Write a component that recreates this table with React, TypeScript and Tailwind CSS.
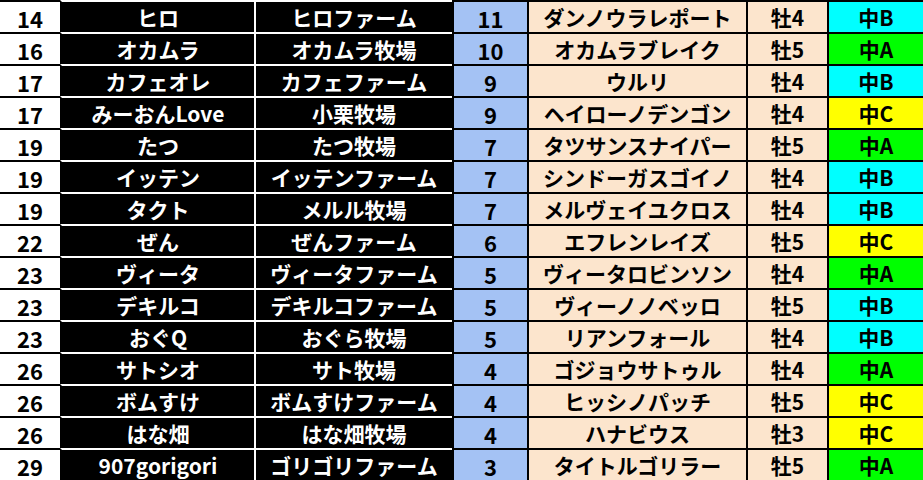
import React from "react";

type Row = {
  rank: number;
  name: string;
  farm: string;
  num: number;
  horse: string;
  sex: string;
  grade: string;
};

const rows: Row[] = [
  { rank: 14, name: "ヒロ", farm: "ヒロファーム", num: 11, horse: "ダンノウラレポート", sex: "牡4", grade: "中B" },
  { rank: 16, name: "オカムラ", farm: "オカムラ牧場", num: 10, horse: "オカムラブレイク", sex: "牡5", grade: "中A" },
  { rank: 17, name: "カフェオレ", farm: "カフェファーム", num: 9, horse: "ウルリ", sex: "牡4", grade: "中B" },
  { rank: 17, name: "みーおんLove", farm: "小栗牧場", num: 9, horse: "ヘイローノデンゴン", sex: "牡4", grade: "中C" },
  { rank: 19, name: "たつ", farm: "たつ牧場", num: 7, horse: "タツサンスナイパー", sex: "牡5", grade: "中A" },
  { rank: 19, name: "イッテン", farm: "イッテンファーム", num: 7, horse: "シンドーガスゴイノ", sex: "牡4", grade: "中B" },
  { rank: 19, name: "タクト", farm: "メルル牧場", num: 7, horse: "メルヴェイユクロス", sex: "牡4", grade: "中B" },
  { rank: 22, name: "ぜん", farm: "ぜんファーム", num: 6, horse: "エフレンレイズ", sex: "牡5", grade: "中C" },
  { rank: 23, name: "ヴィータ", farm: "ヴィータファーム", num: 5, horse: "ヴィータロビンソン", sex: "牡4", grade: "中A" },
  { rank: 23, name: "デキルコ", farm: "デキルコファーム", num: 5, horse: "ヴィーノノベッロ", sex: "牡5", grade: "中B" },
  { rank: 23, name: "おぐQ", farm: "おぐら牧場", num: 5, horse: "リアンフォール", sex: "牡4", grade: "中B" },
  { rank: 26, name: "サトシオ", farm: "サト牧場", num: 4, horse: "ゴジョウサトゥル", sex: "牡4", grade: "中A" },
  { rank: 26, name: "ボムすけ", farm: "ボムすけファーム", num: 4, horse: "ヒッシノパッチ", sex: "牡5", grade: "中C" },
  { rank: 26, name: "はな畑", farm: "はな畑牧場", num: 4, horse: "ハナビウス", sex: "牡3", grade: "中C" },
  { rank: 29, name: "907gorigori", farm: "ゴリゴリファーム", num: 3, horse: "タイトルゴリラー", sex: "牡5", grade: "中A" },
];

const gradeBg: Record<string, string> = {
  "中A": "bg-[#00ff00]",
  "中B": "bg-[#00ffff]",
  "中C": "bg-[#ffff00]",
};

const cell = "h-8 flex items-center justify-center border-t-2 whitespace-nowrap pt-px";

const App = () => {
  return (
    <div
      className="w-[923px] h-[480px] overflow-hidden bg-white font-bold text-[21px] leading-none"
      style={{ fontFamily: '"Noto Sans CJK JP", "Noto Sans", sans-serif' }}
    >
      {rows.map((r, i) => (
        <div key={i} className="grid grid-cols-[60px_194px_198px_75px_219px_81px_96px]">
          <div className={`${cell} bg-white text-black border-black text-[22px]`}>{r.rank}</div>
          <div className={`${cell} bg-black text-white border-white border-l-2 border-l-black`}>{r.name}</div>
          <div className={`${cell} bg-black text-white border-white border-l-2`}>{r.farm}</div>
          <div className={`${cell} bg-[#a4c2f4] text-black border-black border-l-2 text-[22px]`}>{r.num}</div>
          <div className={`${cell} bg-[#fce5cd] text-black border-black border-l-2`}>{r.horse}</div>
          <div className={`${cell} bg-[#fce5cd] text-black border-black border-l-2`}>{r.sex}</div>
          <div className={`${cell} ${gradeBg[r.grade]} text-black border-black border-l-2`}>{r.grade}</div>
        </div>
      ))}
    </div>
  );
};

export default App;
